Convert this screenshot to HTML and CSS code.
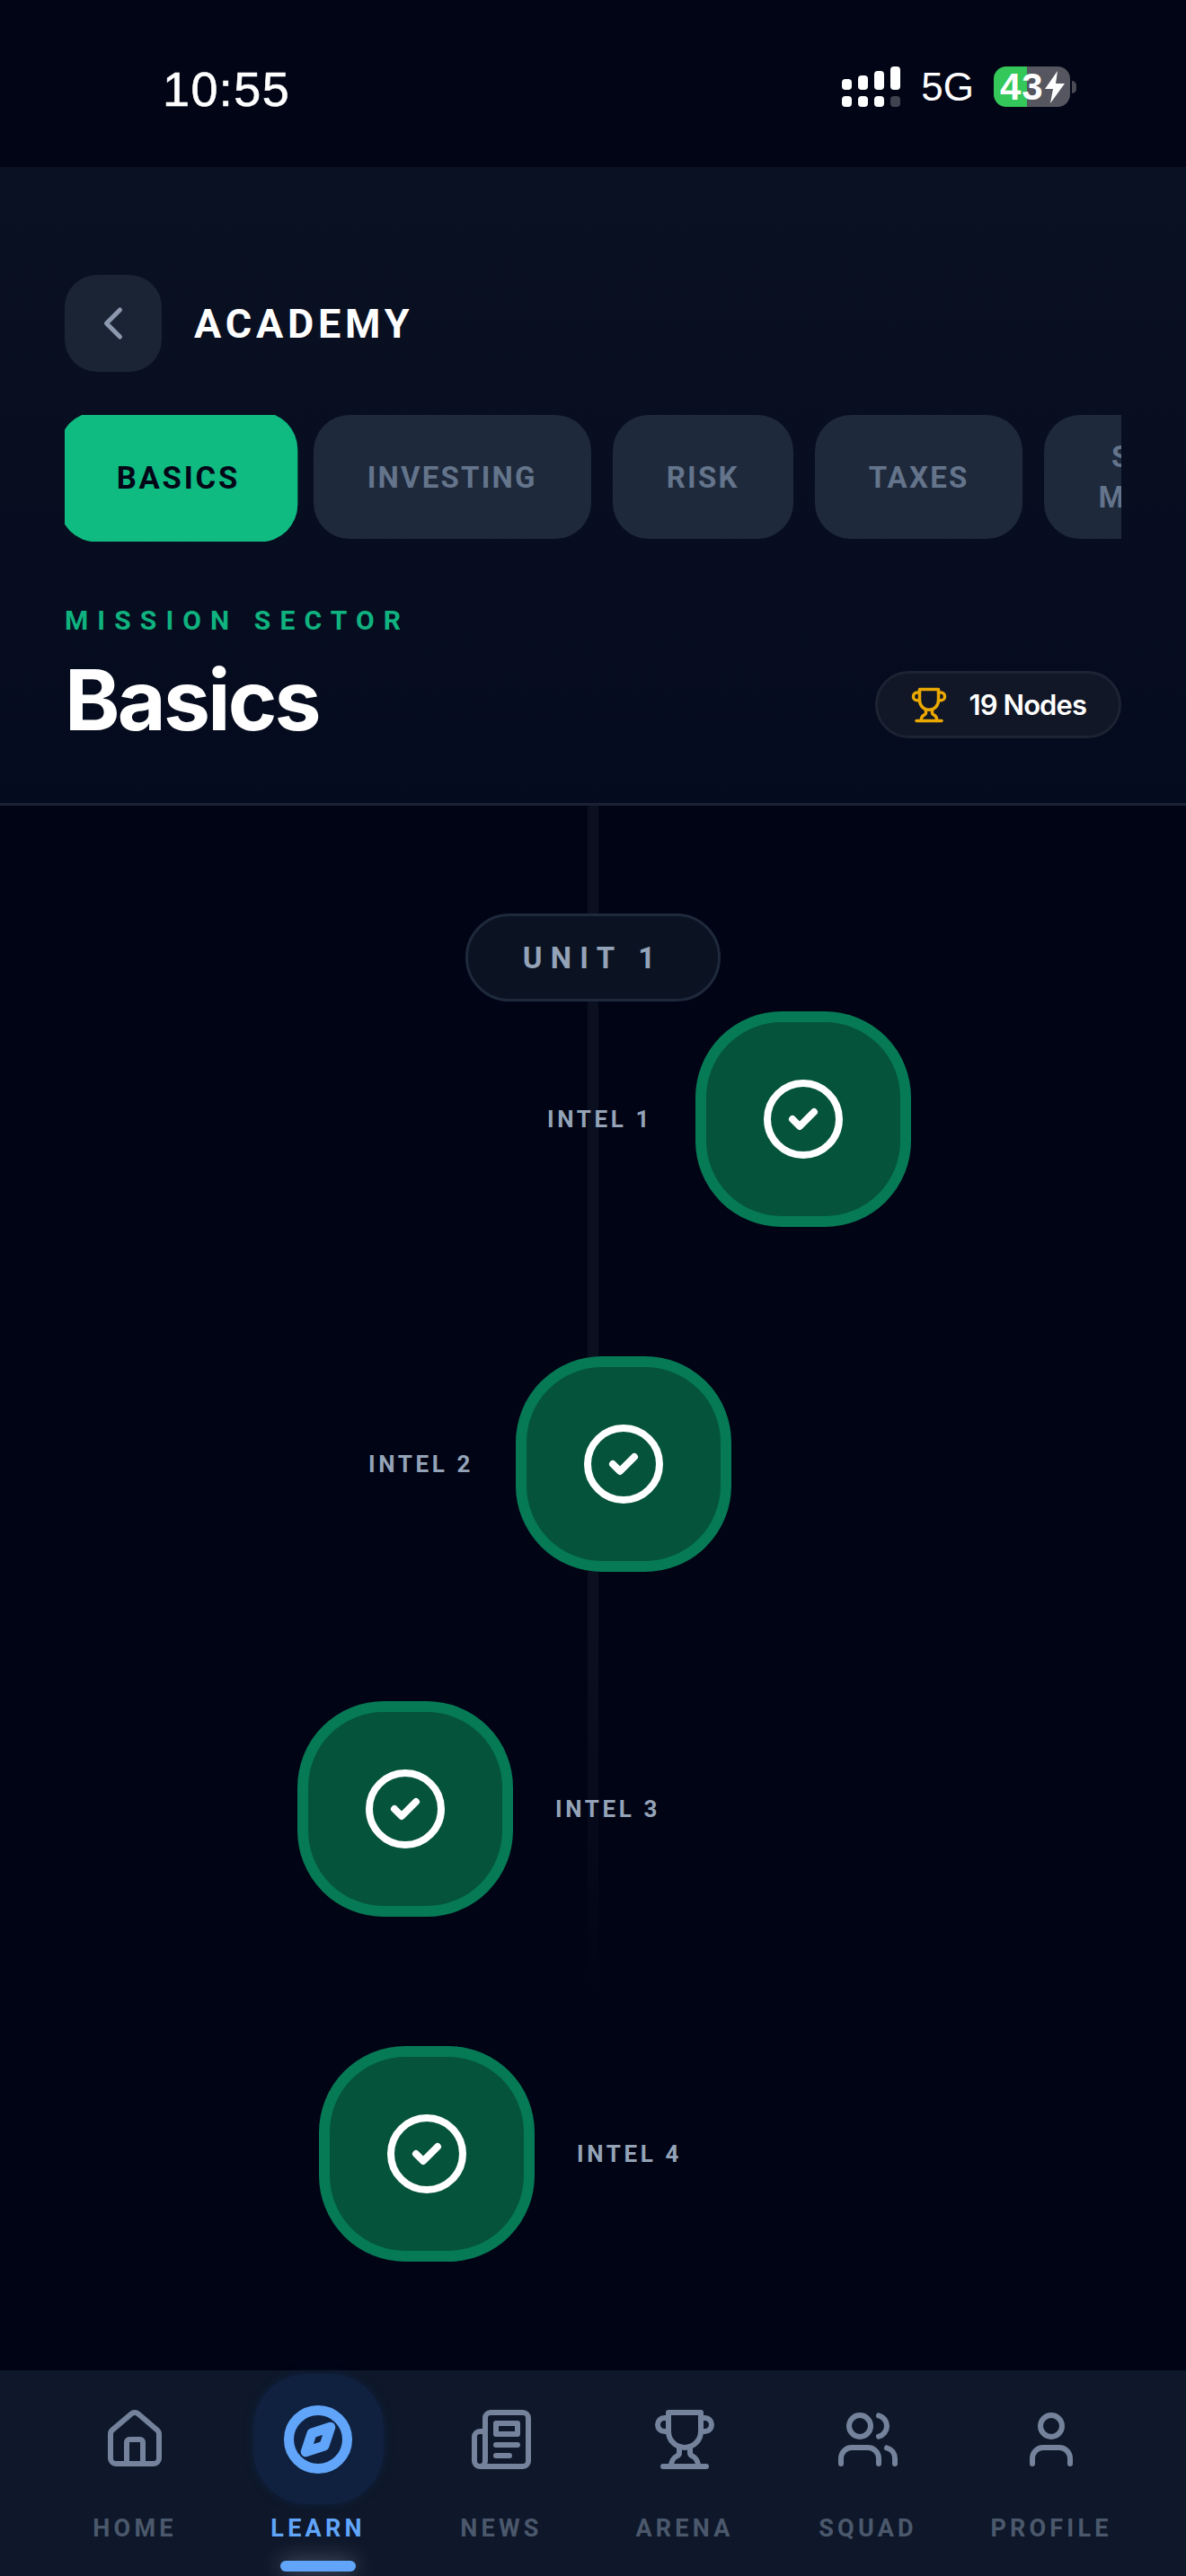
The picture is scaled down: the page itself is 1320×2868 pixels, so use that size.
FILE: index.html
```html
<!DOCTYPE html>
<html lang="en">
<head>
  <meta charset="UTF-8">
  <title>Academy</title>
  <link rel="stylesheet" href="styles.css">
</head>
<body>
<div class="status-bar">
  <span class="time">10:55</span>
  <div class="status-right">
    <svg class="signal" width="66" height="46" viewBox="0 0 66 46" fill="#fff">
      <rect x="0" y="14" width="11" height="12" rx="4"/>
      <rect x="18" y="10" width="11" height="16" rx="4"/>
      <rect x="36" y="5" width="11" height="21" rx="4"/>
      <rect x="54" y="0" width="11" height="26" rx="4"/>
      <rect x="0" y="33" width="11" height="12" rx="4"/>
      <rect x="18" y="33" width="11" height="12" rx="4"/>
      <rect x="36" y="33" width="11" height="12" rx="4"/>
      <rect x="54" y="33" width="11" height="12" rx="4" fill="#40434f"/>
    </svg>
    <span class="network">5G</span>
    <div class="battery">
      <span class="battery-num">43</span>
      <svg class="bolt" width="22" height="36" viewBox="0 0 22 36" fill="#fff"><path d="M14 0 0 20h9L6 36 22 14H12z"/></svg>
      <i class="battery-nub"></i>
    </div>
  </div>
</div>

<header class="header">
  <div class="title-row">
    <button class="back-btn" type="button">
      <svg width="60" height="60" viewBox="0 0 24 24" fill="none" stroke="#8b98ad" stroke-width="2" stroke-linecap="round" stroke-linejoin="round"><path d="m15 18-6-6 6-6"/></svg>
    </button>
    <h1>ACADEMY</h1>
  </div>
  <div class="tabs">
    <div class="tab active">BASICS</div>
    <div class="tab">INVESTING</div>
    <div class="tab">RISK</div>
    <div class="tab">TAXES</div>
    <div class="tab">STOCK<br>MARKET</div>
  </div>
  <div class="sector">MISSION SECTOR</div>
  <div class="sector-row">
    <h2>Basics</h2>
    <div class="nodes-pill">
      <svg width="42" height="42" viewBox="0 0 24 24" fill="none" stroke="#eaa800" stroke-width="2" stroke-linecap="round" stroke-linejoin="round"><path d="M6 9H4.5a2.5 2.5 0 0 1 0-5H6"/><path d="M18 9h1.5a2.5 2.5 0 0 0 0-5H18"/><path d="M4 22h16"/><path d="M10 14.66V17c0 .55-.47.98-.97 1.21C7.85 18.75 7 20.24 7 22"/><path d="M14 14.66V17c0 .55.47.98.97 1.21C16.15 18.75 17 20.24 17 22"/><path d="M18 2H6v7a6 6 0 0 0 12 0V2Z"/></svg>
      <span>19 Nodes</span>
    </div>
  </div>
</header>

<main class="path">
  <div class="path-line"></div>
  <div class="unit-pill">UNIT 1</div>
  <div class="nodes">
    <div class="node-row row-1">
      <span class="node-label">INTEL 1</span>
      <div class="node"><svg width="96" height="96" viewBox="0 0 24 24" fill="none" stroke="#fff" stroke-width="2" stroke-linecap="round" stroke-linejoin="round"><circle cx="12" cy="12" r="10"/><path d="m9 12 2 2 4-4"/></svg></div>
    </div>
    <div class="node-row row-2">
      <span class="node-label">INTEL 2</span>
      <div class="node"><svg width="96" height="96" viewBox="0 0 24 24" fill="none" stroke="#fff" stroke-width="2" stroke-linecap="round" stroke-linejoin="round"><circle cx="12" cy="12" r="10"/><path d="m9 12 2 2 4-4"/></svg></div>
    </div>
    <div class="node-row row-3">
      <div class="node"><svg width="96" height="96" viewBox="0 0 24 24" fill="none" stroke="#fff" stroke-width="2" stroke-linecap="round" stroke-linejoin="round"><circle cx="12" cy="12" r="10"/><path d="m9 12 2 2 4-4"/></svg></div>
      <span class="node-label">INTEL 3</span>
    </div>
    <div class="node-row row-4">
      <div class="node"><svg width="96" height="96" viewBox="0 0 24 24" fill="none" stroke="#fff" stroke-width="2" stroke-linecap="round" stroke-linejoin="round"><circle cx="12" cy="12" r="10"/><path d="m9 12 2 2 4-4"/></svg></div>
      <span class="node-label">INTEL 4</span>
    </div>
  </div>
</main>

<nav class="bottom-nav">
  <div class="nav-item">
    <div class="nav-icon">
      <svg width="72" height="72" viewBox="0 0 24 24" fill="none" stroke="currentColor" stroke-width="2" stroke-linecap="round" stroke-linejoin="round"><path d="M15 21v-8a1 1 0 0 0-1-1h-4a1 1 0 0 0-1 1v8"/><path d="M3 10a2 2 0 0 1 .709-1.528l7-5.999a2 2 0 0 1 2.582 0l7 5.999A2 2 0 0 1 21 10v9a2 2 0 0 1-2 2H5a2 2 0 0 1-2-2z"/></svg>
    </div>
    <span>HOME</span>
  </div>
  <div class="nav-item active">
    <div class="nav-icon">
      <svg width="78" height="78" viewBox="0 0 24 24" fill="none" stroke="currentColor" stroke-width="3.4" stroke-linecap="round" stroke-linejoin="round"><circle cx="12" cy="12" r="10"/><path d="m16.24 7.76-2.12 6.36-6.36 2.12 2.12-6.36 6.36-2.12z"/></svg>
    </div>
    <span>LEARN</span>
    <i class="nav-indicator"></i>
  </div>
  <div class="nav-item">
    <div class="nav-icon">
      <svg width="72" height="72" viewBox="0 0 24 24" fill="none" stroke="currentColor" stroke-width="2" stroke-linecap="round" stroke-linejoin="round"><path d="M4 22h16a2 2 0 0 0 2-2V4a2 2 0 0 0-2-2H8a2 2 0 0 0-2 2v16a2 2 0 0 1-2 2Zm0 0a2 2 0 0 1-2-2v-9c0-1.1.9-2 2-2h2"/><path d="M18 14h-8"/><path d="M15 18h-5"/><path d="M10 6h8v4h-8V6Z"/></svg>
    </div>
    <span>NEWS</span>
  </div>
  <div class="nav-item">
    <div class="nav-icon">
      <svg width="72" height="72" viewBox="0 0 24 24" fill="none" stroke="currentColor" stroke-width="2" stroke-linecap="round" stroke-linejoin="round"><path d="M6 9H4.5a2.5 2.5 0 0 1 0-5H6"/><path d="M18 9h1.5a2.5 2.5 0 0 0 0-5H18"/><path d="M4 22h16"/><path d="M10 14.66V17c0 .55-.47.98-.97 1.21C7.85 18.75 7 20.24 7 22"/><path d="M14 14.66V17c0 .55.47.98.97 1.21C16.15 18.75 17 20.24 17 22"/><path d="M18 2H6v7a6 6 0 0 0 12 0V2Z"/></svg>
    </div>
    <span>ARENA</span>
  </div>
  <div class="nav-item">
    <div class="nav-icon">
      <svg width="72" height="72" viewBox="0 0 24 24" fill="none" stroke="currentColor" stroke-width="2" stroke-linecap="round" stroke-linejoin="round"><path d="M16 21v-2a4 4 0 0 0-4-4H6a4 4 0 0 0-4 4v2"/><circle cx="9" cy="7" r="4"/><path d="M22 21v-2a4 4 0 0 0-3-3.87"/><path d="M16 3.13a4 4 0 0 1 0 7.75"/></svg>
    </div>
    <span>SQUAD</span>
  </div>
  <div class="nav-item">
    <div class="nav-icon">
      <svg width="72" height="72" viewBox="0 0 24 24" fill="none" stroke="currentColor" stroke-width="2" stroke-linecap="round" stroke-linejoin="round"><path d="M19 21v-2a4 4 0 0 0-4-4H9a4 4 0 0 0-4 4v2"/><circle cx="12" cy="7" r="4"/></svg>
    </div>
    <span>PROFILE</span>
  </div>
</nav>
</body>
</html>
```

FILE: styles.css
```css
* { box-sizing: border-box; }
html, body { height: 100%; margin: 0; padding: 0; }
body { width: 1320px; height: 2868px; display: flex; flex-direction: column; overflow: hidden; background: #010415; color: #fff; font-family: Roboto, "Liberation Sans", sans-serif; }

/* status bar */
.status-bar { height: 186px; flex-shrink: 0; display: flex; justify-content: space-between; background: #020516; padding: 74px 129px 0 181px; font-family: "Liberation Sans", Arial, sans-serif; }
.time { font-size: 54px; line-height: 50px; letter-spacing: 1.4px; -webkit-text-stroke: 0.6px #fff; }
.status-right { display: flex; align-items: flex-start; }
.signal { display: block; margin-right: 22px; }
.network { font-size: 44px; line-height: 46px; margin-right: 22px; }
.battery { position: relative; width: 85px; height: 45px; border-radius: 14px; background: linear-gradient(90deg, #34c759 37px, #55565f 37px); display: flex; align-items: center; padding-left: 7px; }
.battery-num { font-size: 42px; font-weight: 700; line-height: 45px; letter-spacing: 1px; }
.bolt { margin-left: 1px; }
.battery-nub { position: absolute; right: -7px; top: 16px; width: 5px; height: 14px; border-radius: 0 5px 5px 0; background: #4a4b55; }

/* header */
.header { height: 711px; flex-shrink: 0; padding: 120px 72px 0; background: linear-gradient(180deg, #0a1122 0%, #050b1e 100%); border-bottom: 3px solid #1a2234; }
.title-row { display: flex; align-items: center; gap: 36px; }
.back-btn { width: 108px; height: 108px; border: none; border-radius: 36px; background: #1a2435; display: flex; align-items: center; justify-content: center; padding: 0; }
h1 { margin: 0; font-size: 45px; font-weight: 700; letter-spacing: 4.8px; }
.tabs { display: flex; gap: 24px; margin-top: 48px; height: 141px; overflow: hidden; }
.tab { flex-shrink: 0; height: 138px; padding: 0 60px; display: flex; align-items: center; text-align: center; border-radius: 40px; background: #1e293b; color: #64748b; font-size: 33px; line-height: 45px; font-weight: 700; letter-spacing: 2.2px; }
.tab.active { padding: 0 61px; background: #10bb82; color: #020617; letter-spacing: 2.6px; transform: scale(1.05); }
.sector { margin-top: 70px; color: #10b27f; font-size: 30px; line-height: 36px; font-weight: 700; letter-spacing: 10.1px; }
.sector-row { display: flex; justify-content: space-between; align-items: center; margin-top: 15px; }
h2 { margin: 0; font-family: Inter, sans-serif; font-size: 93px; line-height: 110px; font-weight: 700; letter-spacing: -0.03em; }
.nodes-pill { display: flex; align-items: center; gap: 24px; height: 75px; margin-top: 11px; padding: 0 36px; border: 3px solid #1c2332; border-radius: 38px; background: #111726; font-family: Inter, sans-serif; font-size: 31px; font-weight: 600; letter-spacing: -0.03em; }

/* path */
.path { position: relative; flex: 1; background: #010415; }
.path-line { position: absolute; left: 654px; top: 0; width: 12px; height: 1320px; background: linear-gradient(180deg, #0b1020 0%, #0b1020 70%, rgba(11, 16, 32, 0) 100%); }
.unit-pill { position: relative; width: 284px; height: 98px; margin: 120px auto 0; display: flex; align-items: center; justify-content: center; border: 3px solid #1e293b; border-radius: 49px; background: #0b1322; color: #94a3b8; font-size: 33px; font-weight: 700; letter-spacing: 9.3px; }
.nodes { position: relative; display: flex; flex-direction: column; gap: 144px; margin-top: 11px; }
.node-row { display: flex; align-items: center; }
.row-1 { justify-content: flex-end; margin-right: 306px; gap: 48px; }
.row-2 { justify-content: flex-end; margin-right: 506px; gap: 47px; }
.row-3 { margin-left: 331px; gap: 47px; }
.row-4 { margin-left: 355px; gap: 47px; }
.node { width: 240px; height: 240px; flex-shrink: 0; display: flex; align-items: center; justify-content: center; border: 12px solid #067a55; border-radius: 96px; background: #05533b; }
.node-label { color: #94a3b8; font-size: 26px; font-weight: 700; letter-spacing: 3.6px; white-space: nowrap; }

/* bottom nav */
.bottom-nav { height: 229px; flex-shrink: 0; display: grid; grid-template-columns: repeat(6, 204px); padding: 4px 48px 0; background: #0e182a; }
.nav-item { position: relative; display: flex; flex-direction: column; align-items: center; color: #74839b; }
.nav-icon { width: 145px; height: 145px; display: flex; align-items: center; justify-content: center; border-radius: 60px; }
.nav-item span { margin-top: 10px; color: #4b586c; font-size: 27px; line-height: 34px; font-weight: 700; letter-spacing: 4.2px; }
.nav-item.active { color: #60a5fa; }
.nav-item.active .nav-icon { background: #10213f; box-shadow: 0 0 10px #10213f; }
.nav-item.active span { color: #60a5fa; }
.nav-indicator { position: absolute; left: 60px; top: 208px; width: 84px; height: 12px; border-radius: 6px; background: #60a5fa; box-shadow: 0 0 24px rgba(190, 200, 220, 0.45); }
```
